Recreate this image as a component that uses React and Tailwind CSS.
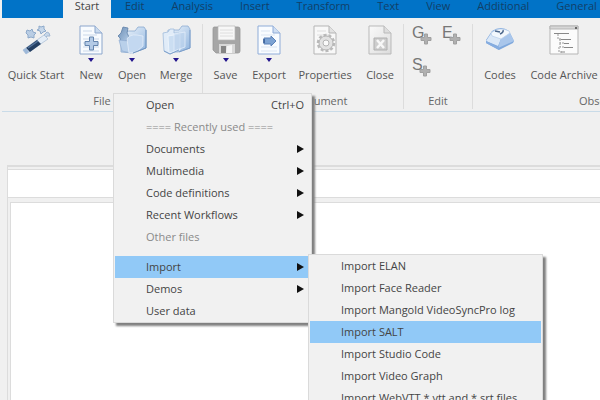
import React from 'react'

const tabs = ['Edit', 'Analysis', 'Insert', 'Transform', 'Text', 'View', 'Additional', 'General']

const fileMenu = [
  { label: 'Open', shortcut: 'Ctrl+O' },
  { label: '==== Recently used ====', disabled: true },
  { label: 'Documents', sub: true },
  { label: 'Multimedia', sub: true },
  { label: 'Code definitions', sub: true },
  { label: 'Recent Workflows', sub: true },
  { label: 'Other files', disabled: true, last: true },
  { label: 'Import', sub: true, active: true },
  { label: 'Demos', sub: true },
  { label: 'User data' },
]

const importMenu = [
  { label: 'Import ELAN' },
  { label: 'Import Face Reader' },
  { label: 'Import Mangold VideoSyncPro log' },
  { label: 'Import SALT', active: true },
  { label: 'Import Studio Code' },
  { label: 'Import Video Graph' },
  { label: 'Import WebVTT *.vtt and *.srt files' },
]

function Icon({ children }) {
  return (
    <svg viewBox="0 0 32 32" className="h-8 w-8 shrink-0" fill="none" aria-hidden="true">
      <defs>
        <linearGradient id="blue" x1="0" y1="0" x2="1" y2="1">
          <stop offset="0" stopColor="#f3f8fd" />
          <stop offset="1" stopColor="#8fb4de" />
        </linearGradient>
        <linearGradient id="deep" x1="0" y1="0" x2="1" y2="1">
          <stop offset="0" stopColor="#6d8fb5" />
          <stop offset="1" stopColor="#b5cde8" />
        </linearGradient>
        <linearGradient id="grey" x1="0" y1="0" x2="1" y2="1">
          <stop offset="0" stopColor="#fafafa" />
          <stop offset="1" stopColor="#dcdcdc" />
        </linearGradient>
      </defs>
      {children}
    </svg>
  )
}

function WandIcon() {
  return (
    <Icon>
      <path d="M7 6l3 1 2-2 1 3 3 1-2 2 0 3-3-1-3 1 0-3-2-2z" fill="#b9cde4" stroke="#8da9ca" />
      <path d="M19 2l2 1 3-1 0 3 2 2-3 1-2 2-1-3-3-1 2-1z" fill="#c6d7ea" stroke="#8da9ca" />
      <path d="M27 8l2 1 1 3-3 0-2 2-1-3z" fill="#c6d7ea" stroke="#a3b8d2" />
      <path d="M3 26L24 11l4 4L6 30z" fill="#e4edf7" stroke="#a5bad2" strokeWidth=".7" />
      <path d="M6 24L17 16l4 4L10 28z" fill="#233e62" />
      <path d="M8 24L18 17" stroke="#54749c" strokeWidth="1.500" />
      <path d="M3 26l3-2 3 4-3 2z" fill="#9db8d8" />
    </Icon>
  )
}

function NewIcon() {
  return (
    <Icon>
      <path d="M5 2h15l7 7v21H5z" fill="#f8fbfe" stroke="#8ca6cc" />
      <path d="M20 2v7h7" fill="#c9daee" stroke="#8ca6cc" />
      <path d="M8 7h9M8 11h14M8 15h16M8 19h16M8 23h16M8 27h16" stroke="#cbd8ea" />
      <path d="M14.500 13h4v4.500h4.500v4h-4.500V26h-4v-4.500H10v-4h4.500z" fill="#b3cae6" stroke="#6585ae" />
    </Icon>
  )
}

function OpenIcon() {
  return (
    <Icon>
      <path d="M12 7h7l3-4h6l2 3v18l-13 5-12-1V15z" fill="url(#blue)" stroke="#8aa9cf" strokeWidth=".8" />
      <path d="M7 3l5 1-1 5 2 4-3 4-5 2-1-5-2-2 3-3z" fill="url(#deep)" stroke="#5f80a8" strokeWidth=".8" />
      <path d="M3 16l9 1 3 12-9-2z" fill="#b9d0ea" stroke="#90aed2" strokeWidth=".7" />
      <path d="M11 15q3-5 10-4l6 1v10l-7 6-7 1z" fill="#c3d8f0" stroke="#e4eef9" strokeWidth=".8" />
      <path d="M30 6v18l-13 5" stroke="#6f94c1" />
    </Icon>
  )
}

function MergeIcon() {
  return (
    <Icon>
      <path d="M8 6h11l3-4h6l2 3v19l-12 4H8z" fill="url(#blue)" stroke="#8fadd3" strokeWidth=".8" />
      <path d="M3 9l5-1 2-3h4v4h5v17l-9 4-6-3z" fill="#e1ecf8" stroke="#a1bcdc" strokeWidth=".8" />
      <path d="M8 12l12-2v16l-11 3z" fill="#cbdef2" stroke="#f0f6fc" strokeWidth=".8" />
      <path d="M14 10l11-2v15l-11 4z" fill="#bcd3ed" fillOpacity=".7" stroke="#e3eefa" strokeWidth=".8" />
      <path d="M30 6v18l-11 4M4 27l6 3 9-4" stroke="#7c9fcb" />
    </Icon>
  )
}

function SaveIcon() {
  return (
    <Icon>
      <path d="M4 3h24q2 0 2 2v22q0 2-2 2H6l-3-3V5q0-2 1-2z" fill="#a6a6a6" stroke="#979797" strokeWidth=".8" />
      <path d="M8 2h17v14H8z" fill="#f7f7f7" stroke="#b8b8b8" strokeWidth=".7" />
      <path d="M10 6h13M10 9h13M10 12h13" stroke="#dedede" />
      <path d="M9 20h16v9H9z" fill="#d8d8d8" />
      <path d="M11 22h5v7h-5z" fill="#858585" />
      <path d="M17 22l5-1v8h-6z" fill="#f5f5f5" />
    </Icon>
  )
}

function ExportIcon() {
  return (
    <Icon>
      <path d="M5 2h15l7 7v21H5z" fill="#f9fcff" stroke="#8facd8" />
      <path d="M20 2v7h7" fill="#cfdef2" stroke="#8facd8" />
      <path d="M8 7h9M8 11h14M8 23h16M8 27h16" stroke="#dbe5f2" />
      <path d="M11 14h7v-2l5 5-5 5v-2h-7z" fill="#7da3d3" stroke="#5c82b8" />
      <path d="M11 15v4" stroke="#345b94" strokeWidth="1.500" />
    </Icon>
  )
}

function PropertiesIcon() {
  return (
    <Icon>
      <path d="M5 2h15l7 7v21H5z" fill="#f8f8f8" stroke="#b5b5b5" />
      <path d="M20 2v7h7" fill="#e2e2e2" stroke="#b5b5b5" />
      <path d="M8 7h9M8 11h14" stroke="#dedede" />
      <circle cx="17" cy="19" r="8" stroke="#bababa" strokeWidth="2.500" strokeDasharray="3 2" />
      <circle cx="17" cy="19" r="7" fill="#e2e2e2" stroke="#b4b4b4" />
      <circle cx="17" cy="19" r="3" fill="#fafafa" stroke="#b4b4b4" />
    </Icon>
  )
}

function CloseIcon() {
  return (
    <Icon>
      <path d="M5 2h15l7 7v21H5z" fill="url(#grey)" stroke="#b9b9b9" />
      <path d="M20 2v7h7" fill="#ddd" stroke="#b9b9b9" />
      <path d="M10 14h13v12H10z" fill="#cdcdcd" stroke="#b0b0b0" />
      <path d="M13 16l7 8M20 16l-7 8" stroke="#f7f7f7" strokeWidth="2.500" />
    </Icon>
  )
}

function CodesIcon() {
  return (
    <Icon>
      <path d="M8 7q9-6 17 0l5 10-1 2-14 7L2 19v-3z" fill="#7fa8dc" />
      <path d="M8 8L2 17l12 5 3-7z" fill="#dbe8f7" />
      <path d="M17 14l9-5 4 8-16 7z" fill="#a9c6eb" />
      <path d="M2 17l13 6v3L2 19z" fill="#86ade0" />
      <path d="M7 9q8-7 18-2l1 2-9 6-9-3z" fill="#f3f8fd" stroke="#b9cfea" strokeWidth=".7" />
      <path d="M11 7l5 1M16 10q4-2 3-4" stroke="#4c678c" strokeWidth="1.500" />
    </Icon>
  )
}

function ArchiveIcon() {
  return (
    <Icon>
      <path d="M2 2h28v28H2z" fill="#fbfbfb" stroke="#b5b5b5" />
      <path d="M2 2h28v3H2z" fill="#d7d7d7" stroke="#b5b5b5" />
      <path d="M27 4h2" stroke="#666" strokeWidth="2" />
      <path d="M6 9.500h15M13 15.500h10M16 19.500h5M16 23.500h9M13 28h4" stroke="#888" />
      <path d="M10 10v5h3M12 15v4h4M12 19v4h4M11 23v5h3" stroke="#999" strokeDasharray="2 1" />
    </Icon>
  )
}

function RibbonButton({ icon, label, arrow, className }) {
  return (
    <button className={`flex shrink-0 flex-col items-center whitespace-nowrap ${className}`}>
      {icon}
      <span className="flex h-[11px] items-start justify-center pt-0.5">
        {arrow && (
          <svg viewBox="0 0 8 4" className="h-1 w-2" aria-hidden="true">
            <path d="M1 0h6L4 4z" fill="#22148c" />
          </svg>
        )}
      </span>
      <span className="leading-4">{label}</span>
    </button>
  )
}

function Group({ title, className, children }) {
  return (
    <section className={`flex shrink-0 flex-col border-r border-[#dcdcdc] ${className}`}>
      <div className="flex flex-1">{children}</div>
      <h2 className="text-center leading-4 text-[#666]">{title}</h2>
    </section>
  )
}

function LetterButton({ letter }) {
  return (
    <button className="flex h-8 w-8 items-start pt-px font-['Liberation_Sans'] text-base leading-4 text-[#777]" aria-label={`Add ${letter}`}>
      {letter}
      <svg viewBox="0 0 12 12" className="-ml-1 mt-2 h-3 w-3" aria-hidden="true">
        <path d="M4.500 1h3v3.500H11v3H7.500V11h-3V7.500H1v-3h3.500z" fill="#b0b0b0" stroke="#a0a0a0" />
      </svg>
    </button>
  )
}

function MenuItem({ item, children }) {
  return (
    <li className={item.last ? 'relative mb-2' : 'relative'}>
      <button
        disabled={item.disabled}
        className={`flex h-[22px] w-full items-center justify-between whitespace-nowrap pl-[31px] pr-1.5 ${
          item.active ? 'bg-[#91c9f7]' : ''
        } ${item.disabled ? 'text-[#8a8a8a]' : 'text-[#444]'}`}
      >
        <span>{item.label}</span>
        {item.shortcut && <span>{item.shortcut}</span>}
        {item.sub && (
          <svg viewBox="0 0 7 8" className="h-2 w-[7px]" aria-hidden="true">
            <path d="M0 0l7 4-7 4z" fill="#111" />
          </svg>
        )}
      </button>
      {children}
    </li>
  )
}

function Menu({ items, className, children }) {
  return (
    <ul className={`absolute z-10 border border-[#dadada] bg-[#f1f1f1] px-px shadow-[3px_3px_2px_#808080] ${className}`}>
      {items.map((item) => (
        <MenuItem key={item.label} item={item}>
          {item.active && children}
        </MenuItem>
      ))}
    </ul>
  )
}

export default function App() {
  return (
    <div className="flex h-screen flex-col overflow-hidden bg-[#f0f0f0] font-['Open_Sans','Noto_Sans',sans-serif] text-[11px] text-[#555]">
      {/* Tabs */}
      <nav className="ml-0.5 flex h-[18px] shrink-0 bg-[#0173c7] text-[#123f68]">
        <div className="w-[61px] shrink-0" />
        <button className="h-[18px] w-12 shrink-0 bg-[#f0f0f0] pb-1.5 leading-3 text-[#444]">Start</button>
        {tabs.map((tab) => (
          <button key={tab} className="shrink-0 pb-1.5 pl-3.5 pr-[13px] leading-3">{tab}</button>
        ))}
      </nav>

      {/* Ribbon */}
      <div className="ml-0.5 flex h-[94px] shrink-0 border-b border-[#c9dbe8] pb-0.5 pt-1.5">
        <Group title="File" className="w-[201px]">
          <RibbonButton icon={<WandIcon />} label="Quick Start" className="w-[68px]" />
          <RibbonButton icon={<NewIcon />} label="New" arrow className="w-[42px]" />
          <div className="relative">
            <RibbonButton icon={<OpenIcon />} label="Open" arrow className="w-10" />
            <Menu items={fileMenu} className="left-px top-[69px] w-[199px]">
              <Menu items={importMenu} className="-top-0.5 left-[193px] w-[235px]" />
            </Menu>
          </div>
          <RibbonButton icon={<MergeIcon />} label="Merge" arrow className="w-12" />
        </Group>
        <Group title="Export document" className="w-[201px]">
          <RibbonButton icon={<SaveIcon />} label="Save" arrow className="w-[45px]" />
          <RibbonButton icon={<ExportIcon />} label="Export" arrow className="w-[42px]" />
          <RibbonButton icon={<PropertiesIcon />} label="Properties" className="w-[70px]" />
          <RibbonButton icon={<CloseIcon />} label="Close" className="w-10" />
        </Group>
        <Group title="Edit" className="w-[69px]">
          <div className="grid grid-cols-2 content-start pl-2">
            <LetterButton letter="G" />
            <LetterButton letter="E" />
            <LetterButton letter="S" />
          </div>
        </Group>
        <Group title="Observation" className="w-[276px]">
          <RibbonButton icon={<CodesIcon />} label="Codes" className="w-[54px]" />
          <RibbonButton icon={<ArchiveIcon />} label="Code Archive" className="w-[74px]" />
        </Group>
      </div>

      {/* Document area */}
      <main className="ml-[7px] mt-[53px] flex flex-1 flex-col border-l border-t-2 border-[#dcdcdc]">
        <div className="mt-0.5 h-[29px] border-y border-[#dcdcdc] bg-white" />
        <div className="ml-0.5 mt-1 flex-1 border-l border-t border-[#dcdcdc] bg-white" />
      </main>
    </div>
  )
}
